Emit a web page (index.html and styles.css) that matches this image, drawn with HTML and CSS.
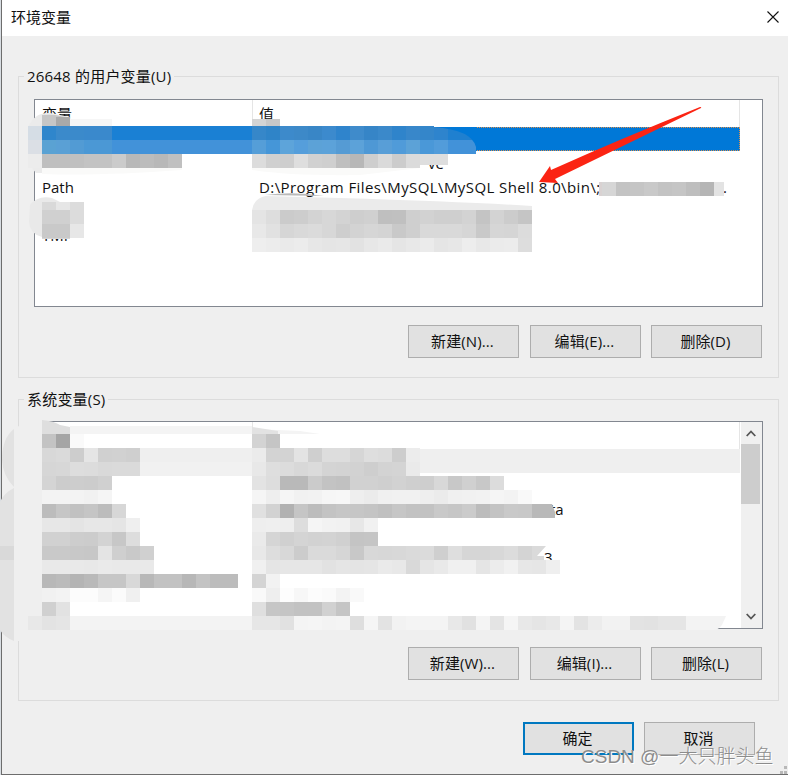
FILE: index.html
```html
<!DOCTYPE html>
<html lang="zh-CN">
<head>
  <meta charset="UTF-8">
  <title>环境变量</title>
  <link rel="stylesheet" href="styles.css">
</head>
<body>
  <div class="window">
    <div class="titlebar">
      <span>环境变量</span>
      <svg class="close" width="12" height="12" viewBox="0 0 12 12"><path d="M.5 .5l11 11M11.5 .5l-11 11"/></svg>
    </div>

    <div class="group">
      <div class="legend"><span>26648 的用户变量(U)</span></div>
      <div class="list">
        <div class="rows">
          <div class="row head"><span>变量</span><span>值</span></div>
          <div class="row selected"></div>
          <div class="row"><span></span><span class="tail-ve">ve</span></div>
          <div class="row"><span>Path</span><span class="path-value">D:\Program Files\MySQL\MySQL Shell 8.0\bin\;</span><span class="dot">.</span></div>
          <div class="row"></div>
          <div class="row"><span>TMP</span></div>
        </div>
      </div>
      <div class="buttons">
        <button>新建(N)...</button>
        <button>编辑(E)...</button>
        <button>删除(D)</button>
      </div>
    </div>

    <div class="group">
      <div class="legend"><span>系统变量(S)</span></div>
      <div class="list">
        <div class="rows">
          <div class="row head"><span></span><span></span></div>
          <div class="row hover"></div>
          <div class="row"></div>
          <div class="row"><span></span><span class="tail-a">ta</span></div>
          <div class="row"></div>
          <div class="row"><span></span><span class="tail-3">.3</span></div>
        </div>
        <div class="scrollbar">
          <svg width="10" height="7" viewBox="0 0 10 7"><path d="M.7 6L5 1.5L9.3 6"/></svg>
          <div class="thumb"></div>
          <svg width="10" height="7" viewBox="0 0 10 7"><path d="M.7 1L5 5.5L9.3 1"/></svg>
        </div>
      </div>
      <div class="buttons">
        <button>新建(W)...</button>
        <button>编辑(I)...</button>
        <button>删除(L)</button>
      </div>
    </div>

    <div class="buttons dialog-buttons">
      <button class="default">确定</button>
      <button>取消</button>
    </div>
  </div>

  <svg class="overlay" width="788" height="775" viewBox="0 0 788 775">
    <!-- smudges around the mosaic -->
    <path fill="#ebebeb" d="M28 128Q34 112 50 113L70 117V126H42V173H36Q28 165 28 152z"/>
    <path fill="#c6c6c6" d="M42 115Q54 114 60 116L70 118V121H42z"/>
    <path fill="#fafaf9" d="M42 168H182V170Q100 176 42 174zM252 168H420L360 175Q290 176 252 170z"/>
    <path fill="#f6f6f6" d="M70 119H112V126H70z"/>
    <path fill="#e9e9e9" d="M30 205Q38 195 52 198L60 202H84V237H42Q30 234 29 222z"/>
    <path fill="#ebebeb" d="M252 210Q254 198 266 196L340 198Q470 202 532 206V210z"/>
    <path fill="#bababa" d="M265 195Q294 191 324 196z"/>
    <path fill="#e2e2e2" d="M2 460Q2 438 14 429V487Q3 476 2 460zM0 502Q4 493 14 488V641Q4 637 0 630z"/>
    <path fill="#d9d9d9" d="M0 546H14V560H0z"/>
    <path fill="#efefef" d="M14 429Q26 420 44 420V616H252V630H718V641H14z"/>
    <path fill="#fff" d="M70 602H252V616H70z"/>
    <path fill="#dedede" d="M42 420Q54 421 60 425L70 427V434H42z"/>
    <path fill="#f4f4f4" d="M70 426H252V434H70zM252 429L300 431L320 434H252z"/>
    <path fill="#e2e2e2" d="M252 427L278 431V434H252z"/>
    <g id="mosaic" shape-rendering="crispEdges"></g>
    <path fill="#0078d7" d="M434 127Q472 130 476 147V127z"/>
    <path fill="#fff" d="M434 125H477V127H434z"/>
    <path fill="#b9b9b9" d="M532 504H552L555 512V518H532z"/>
    <path fill="#dadada" d="M532 546H546L537 556H544V560H532z"/>
    <path fill="#f3f3f3" d="M686 616H726L722 625Q718 630 714 630H686z"/>
    <!-- arrow pointing at the MySQL Shell path -->
    <path fill="#fb2413" d="M539 182L550 166L551 170Q620 139 700 107Q702 107 701 108L555 179L558 183z"/>
    <g fill="#b8b8b8"><path d="M780 771h3v3h-3zM784 771h3v3h-3zM784 766h3v3h-3z"/></g>
  </svg>
  <div class="watermark">CSDN @一大只胖头鱼</div>

  <script src="mosaic.js"></script>
</body>
</html>
```
FILE: styles.css
```css
* { box-sizing: border-box; }
body { margin: 0; width: 788px; height: 775px; overflow: hidden; background: #d8dde2; color: #111; font: 15px/20px "Open Sans", "Noto Sans CJK SC", sans-serif; }
.window { margin-left: 1px; height: 775px; background: #efefef; border-left: 1px solid #6d6d6d; border-bottom: 1px solid #6d6d6d; }
.titlebar { height: 36px; background: #fff; display: flex; align-items: center; justify-content: space-between; padding: 0 9px 2px; }
.close { fill: none; stroke: #111; stroke-width: 1.1; }

.group { width: 761px; height: 302px; margin: 40px 0 0 16px; border: 1px solid #dcdcdc; padding: 0 15px; }
.group + .group { margin-top: 21px; }
.legend { height: 22px; margin: -11px 0 11px -10px; }
.group + .group .legend { margin-bottom: 10px; }
.legend span { display: inline-block; padding: 0 3px; background: #efefef; letter-spacing: 0.2px; }
.list { width: 729px; height: 208px; background: #fff; border: 1px solid #828790; display: flex; justify-content: space-between; }
.rows { width: 705px; }
.row { height: 24px; display: flex; align-items: center; padding: 0 0 1px 7px; white-space: nowrap; }
.row > span:first-child { width: 217px; flex: none; }
.head { height: 27px; padding-bottom: 0; border-right: 1px solid #e5e5e5; background: linear-gradient(#e5e5e5, #e5e5e5) 217px 0 / 1px 27px no-repeat; }
.selected { background: #0078d7; outline: 1px dotted #d89050; outline-offset: -1px; }
.hover { background: #efefef; }
.path-value { width: 341px; letter-spacing: 0.41px; }
.dot { margin-left: 123px; }
.tail-ve { padding-left: 169px; }
.tail-a { padding-left: 291px; }
.tail-3 { padding-left: 281px; }

.scrollbar { width: 21px; background: #f0f0f0; display: flex; flex-direction: column; align-items: center; padding: 8px 2px 8px 0; }
.scrollbar svg { fill: none; stroke: #555; stroke-width: 1.8; flex: none; }
.thumb { width: 19px; height: 60px; background: #cdcdcd; margin: 7px 0 auto; }

.buttons { display: flex; justify-content: flex-end; gap: 10px; margin-top: 18px; }
button { width: 111px; height: 33px; padding: 0 2px 2px 0; border: 1px solid #adadad; background: #e1e1e1; color: #111; font: inherit; letter-spacing: 0.1px; }
.group button:first-child { margin-right: 1px; }
.group .buttons { padding-right: 1px; width: 729px; }
.dialog-buttons { margin: 21px 33px 0 0; }
.default { border: 2px solid #0078c0; }

.overlay { position: absolute; left: 0; top: 0; }
.watermark { position: absolute; left: 581px; top: 743px; font-size: 19px; line-height: 28px; color: #8c8c8c; white-space: nowrap; font-family: "Liberation Sans", "Noto Sans CJK SC", sans-serif; font-weight: 300; text-shadow: 1px 1px 0 #fff; }
```
FILE: mosaic.js
```js
// one cell is 14x14, each entry: row, first column, cell colours
const CELL = 14;
const cells = [
  [8, 3, 'c6 a9'],
  [9, 2, 'd5dde5 2f86cc 3b8acb 3b8acb 3a89cc 3a89cc 1a80d4 1a80d4 1a80d4 1a80d4 1a80d4 1a80d4 1a80d4 1a80d4 1a80d4 1a80d4 3687c9 2f84c8 3d8acb 3d89c8 3986c6 3c8acd 2f84cc 3f8bcb 3685c7 3b89ca 2f84cb 3887ca 3486ca 2e84cd 1f80d0 1f80d0'],
  [10, 2, 'dbdfe5 5aa2d3 5aa0d5 529bd4 4b98d5 4b98d5 4292d9 4292d9 4292d9 4292d9 4292d9 4292d9 4292d9 4292d9 4292d9 4292d9 559ed8 4596d8 5da4da 559edb 5ca2d7 5ca2d9 559bd4 5ca2d9 4e98d5 589ed7 509bd9 5ca2d7 4a98d8 529cda 4292d9 4292d9'],
  [11, 2, 'ec bf bf c0 c3 c3 cb b8 bc b8 c0'],
  [11, 18, 'dc d0 ce de d1 cf bf b7 ce da cc db'],
  [13, 43, 'd6 c3 c5 c9 c3 c5 be b5'],
  [14, 3, 'd9 e6 dc'],
  [15, 3, 'd0 d0 dc'],
  [16, 3, 'c9 c9 e7'],
  [15, 18, 'e4 dd cb cd d3 d7 d3 ce d0 bf c0 cf d2 cf cf d3 c4 d3 cc c5'],
  [16, 18, 'e8 e1 d6 d9 db d7 ce d3 d6 d4 c9 cf d9 d9 d9 d6 c9 d6 d5 dc'],
  [17, 18, 'ee ec ea ec e7 e5 e6 e2 e7 ea e5 e8 eb e5 e7 ed e8 eb ec dd'],
  [31, 3, 'c3 a5 fa'],
  [32, 3, 'd8 da cd e5 d0 d1 cf ef ef ef ef ef ef ef ef'],
  [33, 3, 'd6 d7 dd dc d9 da da f1 f1 f1 f1 f1 f1 f1 f1'],
  [34, 3, 'd4 cc cd cc d0'],
  [35, 3, 'f3 f3 f3 f1 f5'],
  [36, 3, 'bc c6 c1 c5 bc d7'],
  [37, 3, 'e7 e7 e4 e7 e7 e5 ef'],
  [38, 3, 'd1 d1 cd cc d3 c7 dd'],
  [39, 3, 'c9 c9 c8 c7 e4 cf c9 d0'],
  [40, 3, 'e9 e9 e9 e8 ea e9 e9 e9'],
  [41, 3, 'b8 bb b4 b9 c6 c6 d8 b8 c2 c2 b7 c3 bc bc'],
  [42, 3, 'f1 f3 fc fc f5 fb f0'],
  [43, 3, 'd0 e2'],
  [44, 2, 'e8 e3 e5 f3 f3 f3 f3 f3 f3 f3 f3 f3 f3 f3 f3 f3'],
  [31, 18, 'd3 c5'],
  [32, 18, 'eb d3 d3 e3 cf dd dd d6 de dc cd ec'],
  [33, 18, 'e8 de dc d8 db d4 d3 d2 ce d3 d4 ea'],
  [34, 18, 'e3 dd b9 b9 cb c3 c1 d1 d1 cf d2 cf ce d8 c8 d0 c8 dc'],
  [35, 18, 'f5 ee f5 f1 f2 f6 f7 ee eb f0 f1 f1 ee eb f0 f1 f2 f5 f3 f9'],
  [36, 18, 'e0 d2 b1 c5 bc c3 c6 c6 c4 c0 c6 c2 c2 c9 c6 cb bc c3 c9 c8'],
  [37, 18, 'ee ef ee dd f5 f2 f1 e7 f1'],
  [38, 18, 'ea d5 d0 d4 d2 d3 d0 c4 c5'],
  [39, 18, 'e8 dd d8 cc da da d6 c8 d8 d7 d8 da db cf de d6 d6 d8 dc d4'],
  [40, 18, 'f0 e5 e6 e6 e6 e2 e5 e4 e5 ea e8 d9 e5 e9 f0 f0 e5 ec f1 e7 e6 ef'],
  [41, 18, 'd4 f2'],
  [42, 18, 'f9 ee fd f7 fc fa f3 f9'],
  [43, 18, 'df c6 c5 c2 c2 d1 c5'],
  [44, 18, 'e6 e6 e1 f4 f5 f3 f4 de f5 e3 f2 f4 f4 f4 e8 e1 f4 e4 f5 e8 e5 e8 f4 e3 ec f2 f2 e3 e2 e5 e5']
];

const mosaic = document.getElementById('mosaic');

function addRect(x, y, width, height, color) {
  const rect = document.createElementNS('http://www.w3.org/2000/svg', 'rect');
  rect.setAttribute('x', x);
  rect.setAttribute('y', y);
  rect.setAttribute('width', width);
  rect.setAttribute('height', height);
  rect.setAttribute('fill', '#' + color);
  mosaic.appendChild(rect);
}

for (const [row, col, colors] of cells) {
  colors.split(' ').forEach((color, i) => {
    const hex = color.length === 2 ? color.repeat(3) : color;
    let y = row * CELL;
    let h = CELL;
    if (row === 8) { y += 5; h -= 5; }
    if (row === 14) { y += 6; h -= 6; }
    addRect((col + i) * CELL, y, CELL, h, hex);
  });
}

// half covered cells
addRect(252, 119, 14, 7, 'd4d4d4');
addRect(266, 119, 14, 7, 'c8c8c8');
addRect(420, 154, 28, 11, 'dedede');
addRect(599, 182, 3, 14, 'd9d2d2');
addRect(714, 182, 10, 14, 'e3e3e3');
addRect(42, 238, 28, 1, 'd6d6d6');
```
